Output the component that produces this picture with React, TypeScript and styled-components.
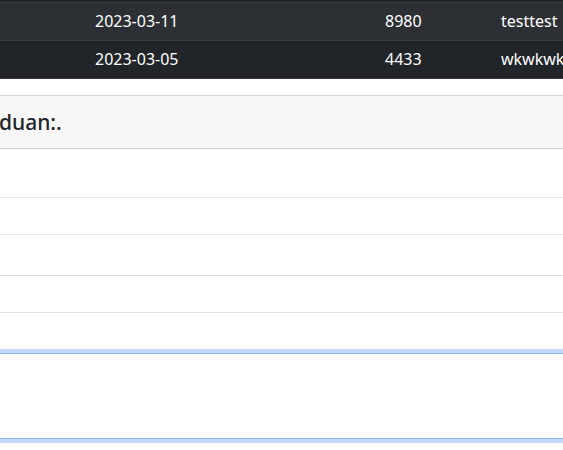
import styled, { createGlobalStyle } from "styled-components";

const GlobalStyle = createGlobalStyle`
  html, body {
    margin: 0;
    padding: 0;
    background: #ffffff;
  }
  body {
    font-family: "Noto Sans", "Open Sans", "Liberation Sans", sans-serif;
    color: #212529;
    overflow: hidden;
  }
`;

// first row sits above the viewport, only its bottom edge shows
const rows = [
  { date: "", amount: "", name: "" },
  { date: "2023-03-11", amount: "8980", name: "testtest" },
  { date: "2023-03-05", amount: "4433", name: "wkwkwkwkwk" },
];

const listRows = [48, 36, 40, 36];

const App = () => {
  return (
    <Page>
      <GlobalStyle />
      <Table>
        <colgroup>
          <col style={{ width: 187 }} />
          <col style={{ width: 290 }} />
          <col style={{ width: 116 }} />
          <col style={{ width: 200 }} />
        </colgroup>
        <tbody>
          {rows.map((r, i) => (
            <Row key={i} $striped={i % 2 === 1}>
              <Cell />
              <Cell>{r.date}</Cell>
              <Cell>{r.amount}</Cell>
              <Cell>{r.name}</Cell>
            </Row>
          ))}
        </tbody>
      </Table>

      <Card>
        <CardHeader>
          <Title>duan:.</Title>
        </CardHeader>
        <CardBody>
          {listRows.map((h, i) => (
            <ListRow key={i} $height={h} />
          ))}
          <Spacer />
          <TextArea readOnly value="" />
        </CardBody>
      </Card>
    </Page>
  );
};

export default App;

const Page = styled.div`
  width: 563px;
  height: 450px;
  overflow: hidden;
`;

const Table = styled.table`
  table-layout: fixed;
  border-collapse: collapse;
  width: 793px;
  margin: -35px 0 0 -100px;
  font-size: 16px;
  color: #ffffff;
`;

const Row = styled.tr<{ $striped: boolean }>`
  background: ${(p) => (p.$striped ? "#2c3034" : "#212529")};
  border-bottom: 1px solid #373b3e;
`;

const Cell = styled.td`
  padding: 7px 8px;
  line-height: 23px;
  height: 23px;
  white-space: nowrap;
  overflow: hidden;
`;

const Card = styled.div`
  margin: 16px -40px 0 -20px;
  border-top: 1px solid #d3d3d3;
`;

const CardHeader = styled.div`
  background: #f7f7f7;
  border-bottom: 1px solid #d3d3d3;
  height: 52px;
  display: flex;
  align-items: center;
  padding-left: 19px;
`;

const Title = styled.h5`
  margin: 0;
  font-size: 21px;
  font-weight: 500;
  line-height: 24px;
  color: #212529;
`;

const CardBody = styled.div`
  display: flex;
  flex-direction: column;
`;

const ListRow = styled.div<{ $height: number }>`
  height: ${(p) => p.$height}px;
  border-bottom: 1px solid #dee2e6;
`;

const Spacer = styled.div`
  height: 40px;
`;

const TextArea = styled.textarea`
  display: block;
  box-sizing: border-box;
  height: 86px;
  margin: 0;
  border: 1px solid #86b7fe;
  box-shadow: 0 0 0 4px #c3dafe;
  outline: none;
  resize: none;
  background: #ffffff;
`;
